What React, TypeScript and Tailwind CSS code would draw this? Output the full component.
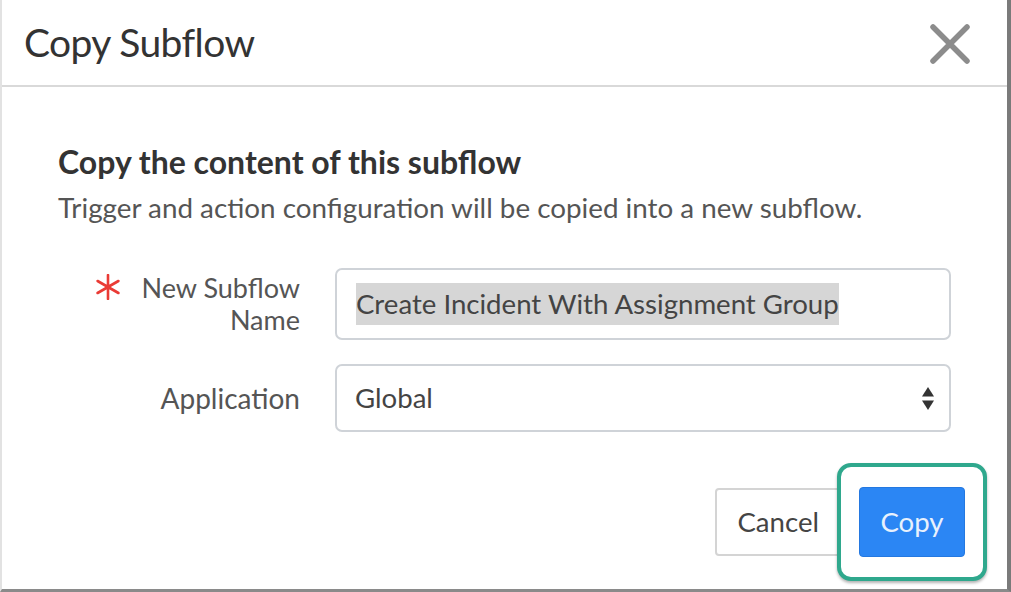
export default function App() {
  return (
    <div
      className="flex h-[592px] w-[1011px] flex-col overflow-hidden border-b-[3px] border-l-2 border-r-[4px] border-b-[#8a8a8a] border-l-[#e2e2e2] border-r-[#7a7a7a] bg-white text-[#2e2e2e]"
      style={{ fontFamily: "Lato, 'Noto Sans', sans-serif" }}
    >
      <header className="flex h-[87px] shrink-0 items-center justify-between border-b-2 border-[#d9d9d9] pl-[22px] pr-[37px]">
        <h1 className="text-[39px] font-normal tracking-[-0.6px] text-[#333]">Copy Subflow</h1>
        <svg width="40" height="40" viewBox="0 0 40 40" className="mt-[2px] text-[#8c8c8c]">
          <path d="M3 3 L37 37 M37 3 L3 37" stroke="currentColor" strokeWidth="5.5" strokeLinecap="round" />
        </svg>
      </header>

      <main className="flex flex-1 flex-col px-[56px] pt-[57px]">
        <h2 className="text-[32px] font-bold leading-[36px] text-[#333]">
          Copy the content of this subflow
        </h2>
        <p className="mt-[11px] text-[27.8px] leading-[34px] text-[#555]">
          Trigger and action configuration will be copied into a new subflow.
        </p>

        <div className="mt-[43px] flex flex-col gap-[24px]">
          <div className="flex items-center gap-[35px]">
            <div className="flex w-[242px] items-start justify-end gap-[20px]">
              <svg width="28" height="26" viewBox="0 0 28 26" className="mt-[2px] text-[#ea3b35]">
                <path
                  d="M14 1 V25 M3.6 7 L24.4 19 M24.4 7 L3.6 19"
                  stroke="currentColor"
                  strokeWidth="2.6"
                  strokeLinecap="round"
                />
              </svg>
              <span className="text-right text-[27px] leading-[32px] text-[#555]">
                New Subflow
                <br />
                Name
              </span>
            </div>
            <div className="flex h-[72px] flex-1 items-center rounded-[7px] border-2 border-[#cfd3d8] px-[19px]">
              <span className="bg-[#d6d6d6] text-[27.6px] leading-[42px] text-[#444]">
                Create Incident With Assignment Group
              </span>
            </div>
          </div>

          <div className="flex items-center gap-[35px]">
            <div className="w-[242px] text-right text-[28px] text-[#555]">Application</div>
            <div className="flex h-[68px] flex-1 items-center justify-between rounded-[7px] border-2 border-[#cfd3d8] pl-[18px] pr-[14px]">
              <span className="text-[27.6px] text-[#444]">Global</span>
              <svg width="14" height="25" viewBox="0 0 14 25" className="text-[#333]">
                <path d="M7 1 L13 10.5 H1 Z" fill="currentColor" />
                <path d="M7 24 L13 14.5 H1 Z" fill="currentColor" />
              </svg>
            </div>
          </div>
        </div>

        <div className="-mr-[36px] mt-[31px] flex items-center justify-end">
          <button className="-mr-[4px] h-[68px] rounded-[4px] border-2 border-[#d4d4d4] px-[20px] text-[27.6px] text-[#444]">
            Cancel
          </button>
          <div className="relative rounded-[14px] border-[4px] border-[#2fa88d] bg-white px-[18px] py-[20px] shadow-[0_2px_3px_rgba(0,0,0,0.3)]">
            <button className="h-[70px] w-[106px] rounded-[4px] border border-[#2478e0] bg-[#2b86f4] text-[27.6px] text-[#e8f1fd]">
              Copy
            </button>
          </div>
        </div>
      </main>
    </div>
  );
}
